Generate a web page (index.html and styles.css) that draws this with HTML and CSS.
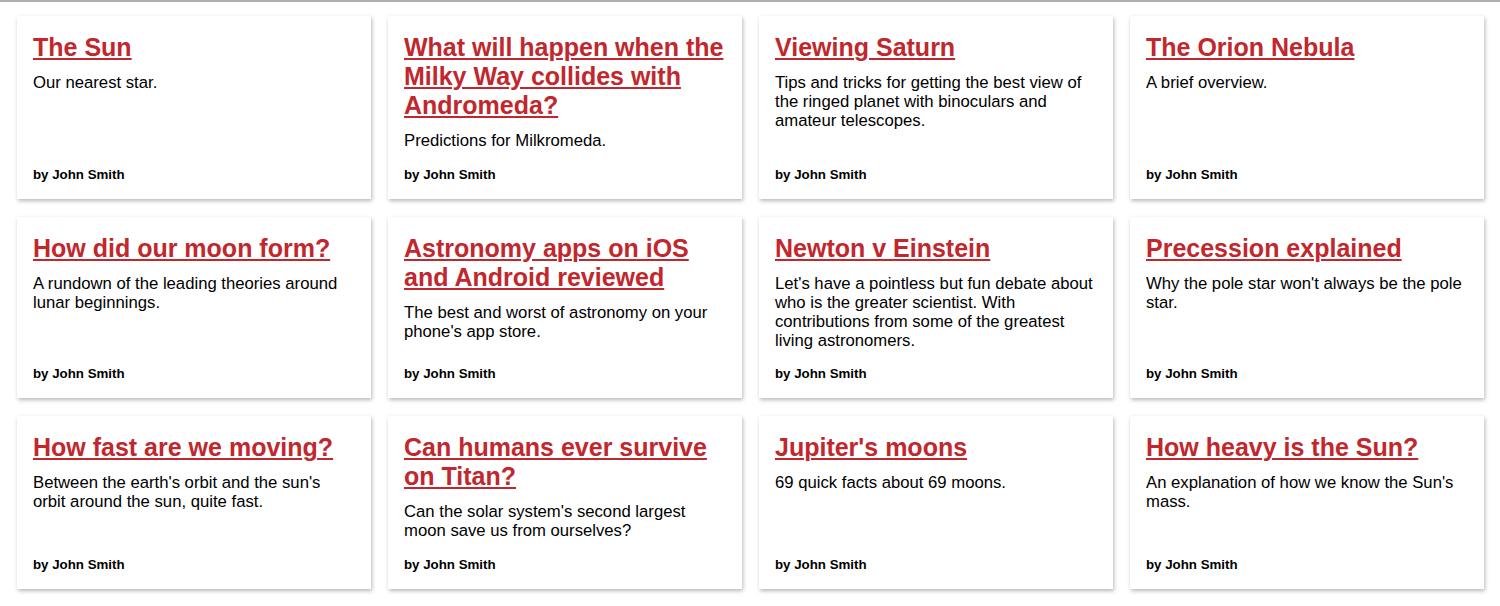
FILE: index.html
```html
<!DOCTYPE html>
<html lang="en">
<head>
<meta charset="utf-8">
<title>Astronomy articles</title>
<link rel="stylesheet" href="styles.css">
</head>
<body>
<main class="grid">
  <article class="card">
    <h2 class="title"><a href="#">The Sun</a></h2>
    <p class="desc">Our nearest star.</p>
    <p class="byline">by John Smith</p>
  </article>
  <article class="card">
    <h2 class="title"><a href="#">What will happen when the Milky Way collides with Andromeda?</a></h2>
    <p class="desc">Predictions for Milkromeda.</p>
    <p class="byline">by John Smith</p>
  </article>
  <article class="card">
    <h2 class="title"><a href="#">Viewing Saturn</a></h2>
    <p class="desc">Tips and tricks for getting the best view of the ringed planet with binoculars and amateur telescopes.</p>
    <p class="byline">by John Smith</p>
  </article>
  <article class="card">
    <h2 class="title"><a href="#">The Orion Nebula</a></h2>
    <p class="desc">A brief overview.</p>
    <p class="byline">by John Smith</p>
  </article>
  <article class="card">
    <h2 class="title"><a href="#">How did our moon form?</a></h2>
    <p class="desc">A rundown of the leading theories around lunar beginnings.</p>
    <p class="byline">by John Smith</p>
  </article>
  <article class="card">
    <h2 class="title"><a href="#">Astronomy apps on iOS and Android reviewed</a></h2>
    <p class="desc">The best and worst of astronomy on your phone's app store.</p>
    <p class="byline">by John Smith</p>
  </article>
  <article class="card">
    <h2 class="title"><a href="#">Newton v Einstein</a></h2>
    <p class="desc">Let's have a pointless but fun debate about who is the greater scientist. With contributions from some of the greatest living astronomers.</p>
    <p class="byline">by John Smith</p>
  </article>
  <article class="card">
    <h2 class="title"><a href="#">Precession explained</a></h2>
    <p class="desc">Why the pole star won't always be the pole star.</p>
    <p class="byline">by John Smith</p>
  </article>
  <article class="card">
    <h2 class="title"><a href="#">How fast are we moving?</a></h2>
    <p class="desc">Between the earth's orbit and the sun's orbit around the sun, quite fast.</p>
    <p class="byline">by John Smith</p>
  </article>
  <article class="card">
    <h2 class="title"><a href="#">Can humans ever survive on Titan?</a></h2>
    <p class="desc">Can the solar system's second largest moon save us from ourselves?</p>
    <p class="byline">by John Smith</p>
  </article>
  <article class="card">
    <h2 class="title"><a href="#">Jupiter's moons</a></h2>
    <p class="desc">69 quick facts about 69 moons.</p>
    <p class="byline">by John Smith</p>
  </article>
  <article class="card">
    <h2 class="title"><a href="#">How heavy is the Sun?</a></h2>
    <p class="desc">An explanation of how we know the Sun's mass.</p>
    <p class="byline">by John Smith</p>
  </article>
</main>
</body>
</html>
```
FILE: styles.css
```css
html, body {
  margin: 0;
  padding: 0;
  background: #ffffff;
}

body {
  font-family: "Liberation Sans", Arial, Helvetica, sans-serif;
  color: #000;
  border-top: 2px solid #b0b0b0;
}

.grid {
  display: grid;
  grid-template-columns: repeat(4, 1fr);
  column-gap: 17px;
  row-gap: 18px;
  padding: 14px 16px 16px 17px;
}

.card {
  display: flex;
  flex-direction: column;
  background: #fff;
  padding: 17px 16px 16px 16px;
  box-shadow: 1px 2px 4px rgba(0, 0, 0, 0.28);
}

.title {
  margin: 0 0 11px 0;
  font-size: 25px;
  line-height: 29px;
  font-weight: bold;
}

.title a {
  color: #c1272d;
  text-decoration: underline;
  text-decoration-thickness: 2px;
  text-underline-offset: 2px;
}

.desc {
  margin: 0 0 16.5px 0;
  font-size: 16.7px;
  line-height: 19px;
  flex-grow: 1;
}

.byline {
  margin: 0;
  font-size: 13.3px;
  line-height: 16px;
  font-weight: bold;
}
```
